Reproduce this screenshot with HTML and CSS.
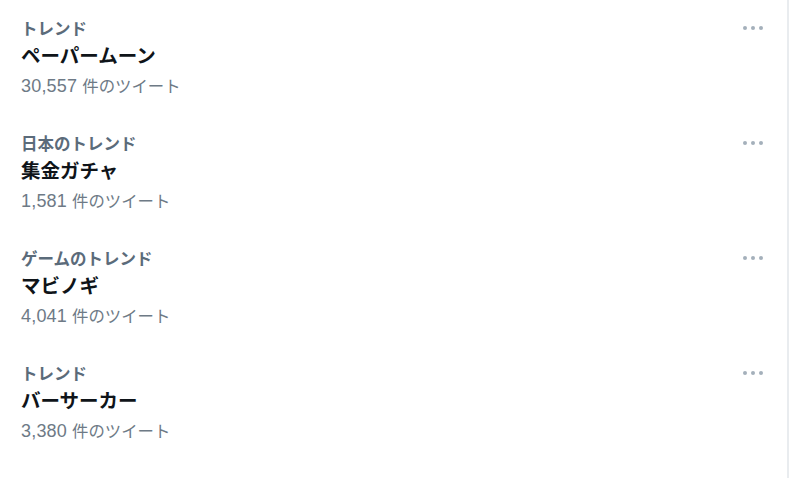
FILE: index.html
```html
<!DOCTYPE html>
<html>
<head>
<meta charset="utf-8">
<link rel="stylesheet" href="styles.css">
</head>
<body>

<!--Trends-->
<div class="trends">

  <div class="trend">
    <div class="trendLabel">トレンド</div>
    <div class="trendName">ペーパームーン</div>
    <div class="trendCount"><span class="num">30,557</span>件のツイート</div>
    <div class="more"><span></span><span></span><span></span></div>
  </div>

  <div class="trend">
    <div class="trendLabel">日本のトレンド</div>
    <div class="trendName">集金ガチャ</div>
    <div class="trendCount"><span class="num">1,581</span>件のツイート</div>
    <div class="more"><span></span><span></span><span></span></div>
  </div>

  <div class="trend">
    <div class="trendLabel">ゲームのトレンド</div>
    <div class="trendName">マビノギ</div>
    <div class="trendCount"><span class="num">4,041</span>件のツイート</div>
    <div class="more"><span></span><span></span><span></span></div>
  </div>

  <div class="trend">
    <div class="trendLabel">トレンド</div>
    <div class="trendName">バーサーカー</div>
    <div class="trendCount"><span class="num">3,380</span>件のツイート</div>
    <div class="more"><span></span><span></span><span></span></div>
  </div>

</div>

</body>
</html>
```

FILE: styles.css
```css
body {
  margin: 0;
  background-color: #ffffff;
  font-family: "Noto Sans CJK JP", "Noto Sans", sans-serif;
}

.trends {
  width: 789px;
  height: 478px;
  border-right: 2px solid #e9ecef;
  box-sizing: border-box;
}

.trend {
  position: relative;
  height: 115px;
  padding: 17px 0 0 21px;
  box-sizing: border-box;
}

.trendLabel {
  color: #5b6b7a;
  font-size: 16.5px;
  font-weight: bold;
  line-height: 22px;
}

.trendName {
  color: #0f1419;
  font-size: 19.5px;
  font-weight: bold;
  line-height: 26px;
  margin-top: 3px;
}

.trendCount {
  color: #6e7a86;
  font-size: 16.4px;
  line-height: 24px;
  margin-top: 5px;
}

.trendCount .num {
  font-family: "Liberation Sans", sans-serif;
  font-size: 18px;
  letter-spacing: 0.2px;
  margin-right: 5px;
}

/* three dots menu */
.more {
  position: absolute;
  top: 26px;
  right: 24px;
  display: flex;
  gap: 4px;
}

.more span {
  width: 4px;
  height: 4px;
  border-radius: 50%;
  background-color: #a4b0bb;
}
```
